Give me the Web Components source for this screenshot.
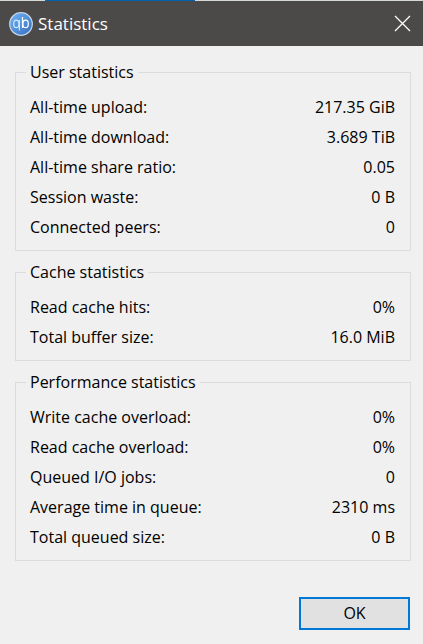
<!DOCTYPE html>
<html lang="en">
<head>
<meta charset="utf-8">
<title>Statistics</title>
<style>
  body { margin: 0; background: #f0f0f0; color: #000; font: 16px/30px "Open Sans", "Noto Sans", sans-serif; }
</style>
</head>
<body>
<stats-dialog>
  <title-bar slot="title">Statistics</title-bar>
  <stats-group heading="User statistics">
    <stat-row label="All-time upload:">217.35 GiB</stat-row>
    <stat-row label="All-time download:">3.689 TiB</stat-row>
    <stat-row label="All-time share ratio:">0.05</stat-row>
    <stat-row label="Session waste:">0 B</stat-row>
    <stat-row label="Connected peers:">0</stat-row>
  </stats-group>
  <stats-group heading="Cache statistics">
    <stat-row label="Read cache hits:">0%</stat-row>
    <stat-row label="Total buffer size:">16.0 MiB</stat-row>
  </stats-group>
  <stats-group heading="Performance statistics">
    <stat-row label="Write cache overload:">0%</stat-row>
    <stat-row label="Read cache overload:">0%</stat-row>
    <stat-row label="Queued I/O jobs:">0</stat-row>
    <stat-row label="Average time in queue:">2310 ms</stat-row>
    <stat-row label="Total queued size:">0 B</stat-row>
  </stats-group>
  <dialog-button slot="actions">OK</dialog-button>
</stats-dialog>
<script>
  const define = (name, html, setup) => customElements.define(name, class extends HTMLElement {
    constructor() {
      super();
      this.attachShadow({ mode: "open" }).innerHTML = html;
    }
    connectedCallback() { if (setup) setup(this, this.shadowRoot); }
  });

  define("stats-dialog", `
    <style>
      :host { display: flex; flex-direction: column; min-height: 100vh; }
      main { display: flex; flex-direction: column; gap: 10px; padding: 15px 12px 0 15px; }
      footer { display: flex; justify-content: flex-end; padding: 36px 13px 14px; }
    </style>
    <slot name="title"></slot>
    <main><slot></slot></main>
    <footer><slot name="actions"></slot></footer>`);

  define("title-bar", `
    <style>
      :host { display: block; background: #4c4a48; color: #fff; }
      .edge { height: 1px; background: linear-gradient(90deg, #d5d9d5 45px, #0063b1 45px 195px, #d5d9d5 195px); }
      header { display: flex; align-items: center; height: 45px; padding: 0 12px 0 9px; gap: 5px; }
      h1 { flex: 1; margin: 0; font: 17px/24px "Open Sans", "Noto Sans", sans-serif; }
      svg { display: block; }
      button { border: 0; padding: 0; background: none; color: inherit; }
    </style>
    <div class="edge"></div>
    <header>
      <svg width="24" height="24" viewBox="0 0 24 24" fill="none" aria-hidden="true">
        <defs><linearGradient id="g" x1="0" y1="0" x2="1" y2="1"><stop stop-color="#72b4f5"/><stop offset="1" stop-color="#356ebf"/></linearGradient></defs>
        <circle cx="12" cy="12" r="11.3" fill="url(#g)" stroke="#c5d6ea" stroke-width="1.2"/>
        <g stroke-width="1.2">
          <g stroke="#c8e8ff"><ellipse cx="7.3" cy="11.9" rx="2.6" ry="3.7"/><path d="M10.4 8V18.5"/></g>
          <g stroke="#fff"><path d="M13.5 5v11"/><ellipse cx="16.6" cy="11.9" rx="2.7" ry="3.7"/></g>
        </g>
      </svg>
      <h1><slot></slot></h1>
      <button type="button" aria-label="Close">
        <svg width="17" height="17" viewBox="0 0 17 17" aria-hidden="true"><path d="M1 1l15 15M16 1L1 16" stroke="#fff" stroke-width="1.3"/></svg>
      </button>
    </header>`);

  define("stats-group", `
    <style>
      :host { display: block; }
      fieldset { min-width: 0; margin: 0; padding: 9px 15px 8px 10px; border: 1px solid #dcdcdc; }
      legend { padding: 0 4px; line-height: 22px; }
      fieldset > div { padding-left: 4px; }
    </style>
    <fieldset><legend></legend><div><slot></slot></div></fieldset>`,
    (host, root) => { root.querySelector("legend").textContent = host.getAttribute("heading"); });

  define("stat-row", `
    <style>
      :host { display: flex; justify-content: space-between; gap: 12px; }
    </style>
    <span id="label"></span><span role="status" aria-labelledby="label"><slot></slot></span>`,
    (host, root) => { root.getElementById("label").textContent = host.getAttribute("label"); });

  define("dialog-button", `
    <style>
      :host { display: block; }
      button { min-width: 111px; height: 33px; padding: 0 12px; border: 2px solid #0078d7; background: #e1e1e1; color: #000; font: inherit; line-height: 29px; }
    </style>
    <button type="button"><slot></slot></button>`);
</script>
</body>
</html>
